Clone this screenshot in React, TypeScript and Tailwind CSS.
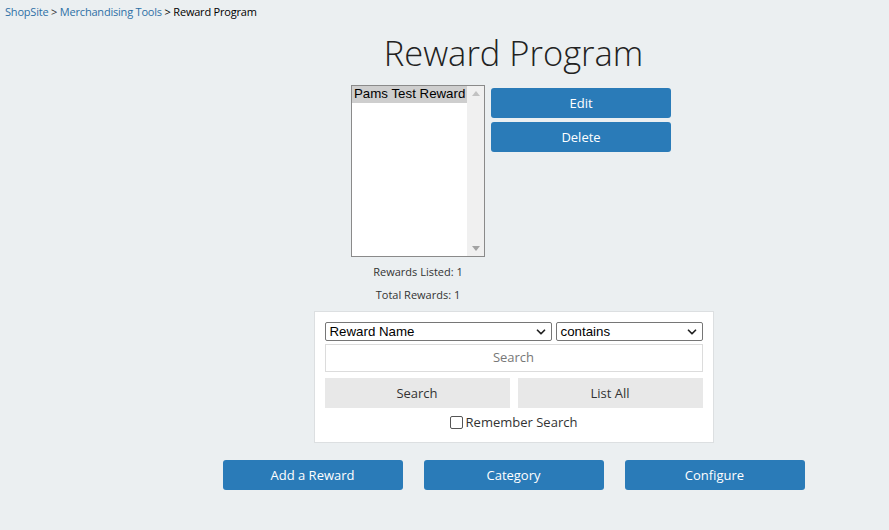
import { ChevronDown } from 'lucide-react'

const sans = "font-['Open_Sans',_'Liberation_Sans',_sans-serif]"
const arial = "font-['Liberation_Sans',_Arial,_sans-serif]"

function BlueButton({ label, className = '' }: { label: string; className?: string }) {
  return (
    <button
      className={`h-[30px] w-[180px] rounded-[3px] bg-[#2a7bb8] pt-[1px] text-[13px] text-white ${className}`}
    >
      {label}
    </button>
  )
}

function FakeSelect({ value, width }: { value: string; width: string }) {
  return (
    <div
      className={`${width} ${arial} flex h-[19px] items-center justify-between rounded-[2px] border border-[#767676] bg-white pl-[4px] pr-[3px] text-[13.3px] leading-none text-black`}
    >
      <span>{value}</span>
      <ChevronDown size={14} strokeWidth={3} className="text-[#222]" />
    </div>
  )
}

export default function App() {
  return (
    <div className={`${sans} min-h-[530px] bg-[#ebeff1] text-[#333]`}>
      {/* breadcrumb */}
      <div className="px-[5px] pt-[3px] text-[11px] leading-[17px] tracking-[-0.2px]">
        <a className="text-[#2e6fa6]">ShopSite</a>
        <span> &gt; </span>
        <a className="text-[#2e6fa6]">Merchandising Tools</a>
        <span className="text-black"> &gt; Reward Program</span>
      </div>

      <div className="flex flex-col items-center pl-[138px]">
        <h1 className="mt-[8px] text-[34.5px] font-light leading-[49px] text-[#222]">Reward Program</h1>

        <div className="mt-[8px] flex gap-[6px] pr-[5px]">
          <div className="flex flex-col items-center">
            <div className="flex h-[172px] w-[134px] border border-[#8a8a8a] bg-white">
              <div className="flex-1 overflow-hidden">
                <div
                  className={`${arial} h-[17px] whitespace-nowrap bg-[#cecece] pl-[2px] text-[13.3px] leading-[16px] text-black`}
                >
                  Pams Test Reward
                </div>
              </div>
              <div className="flex w-[17px] flex-col items-center justify-between bg-[#f0f0f0] py-[5px]">
                <svg width="8" height="5" viewBox="0 0 8 5">
                  <path d="M0 5 L4 0 L8 5 Z" fill="#c2c2c2" />
                </svg>
                <svg width="8" height="5" viewBox="0 0 8 5">
                  <path d="M0 0 L8 0 L4 5 Z" fill="#a3a3a3" />
                </svg>
              </div>
            </div>
            <div className="mt-[6px] text-[11px] leading-[17px] text-[#333]">Rewards Listed: 1</div>
            <div className="mt-[6px] text-[11px] leading-[17px] text-[#333]">Total Rewards: 1</div>
          </div>
          <div className="mt-[3px] flex flex-col gap-[4px]">
            <BlueButton label="Edit" />
            <BlueButton label="Delete" />
          </div>
        </div>

        <div className="mt-[8px] flex w-[400px] flex-col border border-[#dcdfe1] bg-white px-[10px] pt-[10px] pb-[11px]">
          <div className="flex gap-[4px]">
            <FakeSelect value="Reward Name" width="w-[227px]" />
            <FakeSelect value="contains" width="w-[147px]" />
          </div>
          <div className="mt-[3px] flex h-[28px] items-center justify-center border border-[#dcdcdc] text-[13px] text-[#777]">
            Search
          </div>
          <div className="mt-[6px] flex gap-[8px]">
            <button className="h-[30px] flex-1 bg-[#e8e8e8] pt-[1px] text-[13px] text-[#333]">Search</button>
            <button className="h-[30px] flex-1 bg-[#e8e8e8] pt-[1px] text-[13px] text-[#333]">List All</button>
          </div>
          <label className="mt-[5px] flex items-center justify-center gap-[3px] text-[13px] leading-[18px]">
            <span className="inline-block h-[13px] w-[13px] rounded-[2px] border border-[#555] bg-white" />
            Remember Search
          </label>
        </div>

        <div className="mt-[17px] flex gap-[21px]">
          <BlueButton label="Add a Reward" />
          <BlueButton label="Category" />
          <BlueButton label="Configure" />
        </div>
      </div>
    </div>
  )
}
